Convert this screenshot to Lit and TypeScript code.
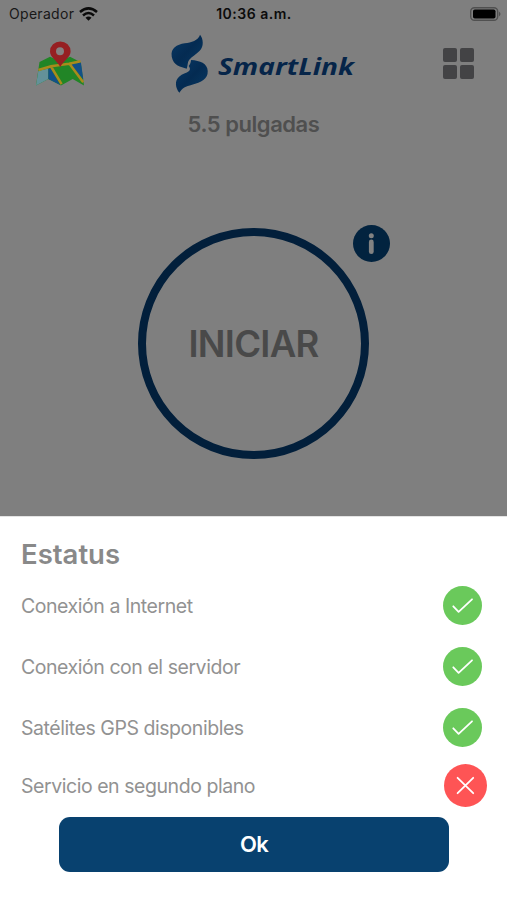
import { LitElement, html, css, svg } from "lit";
import { customElement, property } from "lit/decorators.js";

@customElement("status-row")
class StatusRow extends LitElement {
  @property() label = "";
  @property({ type: Boolean }) ok = false;
  static styles = css`
    :host { display: flex; align-items: center; justify-content: space-between; padding: 0 25px 0 21px; box-sizing: border-box; }
    :host(:not([ok])) { padding-right: 20px; }
    .label { font-size: 19.5px; color: #929292; letter-spacing: -.45px; white-space: nowrap; }
    svg { display: block; }
  `;
  render() {
    return html`<span class="label">${this.label}</span>
      ${this.ok
        ? html`<svg width="39" height="39" viewBox="0 0 39 39"><circle cx="19.5" cy="19.5" r="19.5" fill="#6ac95b"/><path d="M10.3 20.3 L15.6 25.8 L29 13.3" fill="none" stroke="#fff" stroke-width="1.8" stroke-linecap="round" stroke-linejoin="round"/></svg>`
        : html`<svg width="43" height="43" viewBox="0 0 43 43"><circle cx="21.5" cy="21.5" r="21.5" fill="#fe5455"/><path d="M13.6 13.8 L29.2 29.2 M29.2 13.8 L13.6 29.2" fill="none" stroke="#fff" stroke-width="1.8" stroke-linecap="round"/></svg>`}`;
  }
}

const mapIcon = svg`
  <path d="M3.5 21 L14 15.7 L24 20 L34 15.7 L44.7 21.3 L48 44.5 L36.7 38 L25 44.5 L12.3 38 L0 44.5 Z" fill="#218526"/>
  <path d="M2.3 30 L12.3 27.5 L12.3 38 L0 44.5 Z" fill="#639199"/>
  <path d="M12.3 28 L14.5 27 L24.3 44 L12.3 38 Z" fill="#125087"/>
  <path d="M35 23.5 L44.9 21.5 L47.3 38.5 Z" fill="#125087"/>
  <path d="M2.4 29 L15 25.3 L33 22.7 L44.5 20.3 M14.7 25 L25.6 43.2 M33.3 22.5 L47.2 41.2" fill="none" stroke="#a98a1c" stroke-width="2.5"/>
  <path d="M24.3 26 C21 19.5 14 16.5 14 10.5 A10.2 10 0 0 1 34.6 10.5 C34.6 16.5 27.6 19.5 24.3 26 Z" fill="#961f22"/>
  <circle cx="24" cy="10.3" r="4" fill="#858081"/>`;

@customElement("app-root")
class AppRoot extends LitElement {
  static styles = css`
    :host { display: flex; flex-direction: column; width: 507px; height: 900px; overflow: hidden; font-family: Inter, "Liberation Sans", sans-serif; background: #fff; }
    .screen { height: 516px; background: #7f7f7f; display: flex; flex-direction: column; align-items: center; flex: none; }
    .status { width: 100%; height: 27px; display: grid; grid-template-columns: 1fr auto 1fr; align-items: center; box-sizing: border-box; padding: 0 6px 0 9px; font-size: 14px; color: #181818; }
    .carrier { display: flex; align-items: center; gap: 5px; letter-spacing: .3px; }
    .time { font-weight: 600; color: #0c0c0c; font-size: 14px; letter-spacing: .5px; margin-right: 2px; }
    .battery { justify-self: end; }
    .header { width: 100%; height: 72px; display: flex; align-items: center; justify-content: space-between; box-sizing: border-box; padding: 1px 33px 0 36px; }
    .header svg { display: block; }
    .brand { font: italic 700 24px "Open Sans", sans-serif; fill: #062549; }
    .device { height: 49px; line-height: 51px; font-size: 22px; font-weight: 600; color: #4f4f4f; letter-spacing: -.45px; }
    .dial { position: relative; margin: 80px 0 0; width: 231px; height: 231px; border: 8px solid #021f3b; border-radius: 50%; box-sizing: border-box; display: flex; align-items: center; justify-content: center; }
    .start { font-size: 36.5px; font-weight: 600; color: #494949; letter-spacing: -.75px; }
    .info { position: absolute; left: 207px; top: -11px; }
    .sheet { flex: 1; display: flex; flex-direction: column; border-top: 1px solid #e4e4e4; }
    h2 { margin: 19px 0 0 21px; height: 36px; line-height: 36px; font-size: 27.5px; letter-spacing: 0; font-weight: 600; color: #898989; }
    .rows { display: flex; flex-direction: column; gap: 22px; margin-top: 14px; }
    status-row[last] { margin-top: -5px; }
    button { border: 0; margin: 10px 0 0 59px; padding: 0 0 2px; width: 390px; height: 55px; border-radius: 11px; background: #08416f; color: #fff; font: 600 22px Inter, sans-serif; letter-spacing: -.8px; }
  `;
  render() {
    return html`
      <div class="screen">
        <div class="status">
          <div class="carrier"><span>Operador</span>
            <svg width="19" height="14" viewBox="0 0 19 14" fill="none" stroke="#0b0b0b" stroke-width="2.5"><path d="M1 5 Q9.5 -2.3 18 5"/><path d="M4 8.5 Q9.5 3.5 15 8.5"/><path d="M9.5 13.8 L6.5 10.8 Q9.5 8.3 12.5 10.8 Z" fill="#0b0b0b" stroke="none"/></svg>
          </div>
          <span class="time">10:36 a.m.</span>
          <svg class="battery" width="31" height="14" viewBox="0 0 31 14"><rect x=".7" y=".7" width="27" height="12.6" rx="3.8" fill="#7f7f7f" stroke="#505050" stroke-width="1.4"/><rect x="3" y="2.5" width="22.5" height="9" rx="1.8" fill="#000"/><path d="M29 4.5 Q32 7 29 9.5Z" fill="#505050"/></svg>
        </div>
        <div class="header">
          <svg width="49" height="46" viewBox="0 0 49 46">${mapIcon}</svg>
          <svg width="188" height="62" viewBox="0 0 188 62">
            <defs>
              <linearGradient id="upper" x1="0" y1="0" x2="1" y2="1"><stop offset="0" stop-color="#083864"/><stop offset=".5" stop-color="#042b52"/><stop offset="1" stop-color="#073963"/></linearGradient>
            </defs>
            <g transform="translate(-10.6 -32.3) scale(.3333)" fill="url(#upper)">
              <path d="M122 102 C132 114 134 138 121 150 C110 162 98 166 89 178 C84 185 86 192 82 204 C64 198 42 196 37 168 C33 142 52 132 76 128 C96 125 116 120 122 102Z"/>
              <path d="M95 178 C122 180 144 188 145 211 C146 236 125 245 98 252 C79 257 68 262 60 276 C48 262 45 240 59 228 C69 219 81 218 89 211 C94 206 91 201 88 196 C92 191 94 187 95 178Z"/>
            </g>
            <text class="brand" x="48" y="42" textLength="136" lengthAdjust="spacingAndGlyphs">SmartLink</text>
          </svg>
          <svg width="31" height="31" viewBox="0 0 31 31" fill="#434345"><rect width="14" height="14" rx="2"/><rect x="17" width="14" height="14" rx="2"/><rect y="17" width="14" height="14" rx="2"/><rect x="17" y="17" width="14" height="14" rx="2"/></svg>
        </div>
        <div class="device">5.5 pulgadas</div>
        <div class="dial"><span class="start">INICIAR</span>
          <svg class="info" width="37" height="37" viewBox="0 0 37 37"><circle cx="18.5" cy="18.5" r="18.5" fill="#02233f"/><circle cx="18.3" cy="10.7" r="2.5" fill="#828282"/><path d="M18.3 17V26.7" stroke="#828282" stroke-width="4.8" stroke-linecap="round"/></svg>
        </div>
      </div>
      <div class="sheet">
        <h2>Estatus</h2>
        <div class="rows">
          <status-row ok label="Conexión a Internet"></status-row>
          <status-row ok label="Conexión con el servidor"></status-row>
          <status-row ok label="Satélites GPS disponibles"></status-row>
          <status-row last label="Servicio en segundo plano"></status-row>
        </div>
        <button>Ok</button>
      </div>`;
  }
}
